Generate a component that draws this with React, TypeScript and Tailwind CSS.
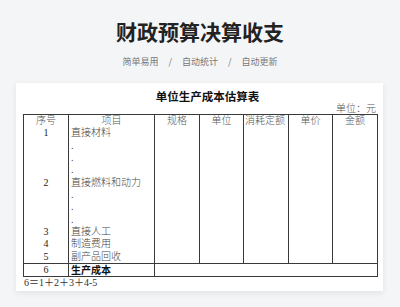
import React from "react";

const serif = { fontFamily: '"Liberation Serif", "Noto Sans CJK SC", serif' };

type Row = { n?: string; item?: string; dot?: boolean };

const rows: Row[] = [
  { n: "1", item: "直接材料" },
  { dot: true },
  { dot: true },
  { dot: true },
  { n: "2", item: "直接燃料和动力" },
  { dot: true },
  { dot: true },
  { dot: true },
  { n: "3", item: "直接人工" },
  { n: "4", item: "制造费用" },
  { n: "5", item: "副产品回收" },
];

export default function App() {
  const cell = "border-x border-[#3a3a3a] p-0 h-[12.33px] leading-[12.33px]";
  return (
    <div className="w-[400px] h-[307px] bg-[#f4f5f7] overflow-hidden" style={{ fontFamily: '"Noto Sans CJK SC", "Noto Sans", sans-serif' }}>
      <div className="pt-[17px] h-[45px] text-center text-[21px] leading-[28px] font-bold text-[#222]">财政预算决算收支</div>
      <div className="mt-[10px] flex justify-center items-center text-[9px] leading-[14px] text-[#777]">
        <span>简单易用</span>
        <span className="mx-[10px]">/</span>
        <span>自动统计</span>
        <span className="mx-[10px]">/</span>
        <span>自动更新</span>
      </div>
      <div className="mt-[14px] ml-[16px] w-[367px] h-[208px] bg-white shadow-[0_2px_6px_rgba(0,0,0,0.08)] pt-[6px] pl-[7px]" style={serif}>
        <div className="w-[355px] pl-[14px] text-center text-[11.5px] leading-[14px] font-bold text-[#111]" style={{ fontFamily: '"Noto Sans CJK SC", sans-serif' }}>
          单位生产成本估算表
        </div>
        <div className="w-[353px] text-right text-[10px] leading-[10px] text-[#555] pt-[1px] font-light">单位：元</div>
        <table className="table-fixed border-collapse border border-[#3a3a3a] text-[10px] text-[#444] font-light w-[355px]">
          <colgroup>
            <col className="w-[45px]" />
            <col className="w-[86px]" />
            <col className="w-[45px]" />
            <col className="w-[44px]" />
            <col className="w-[45px]" />
            <col className="w-[44px]" />
            <col className="w-[45px]" />
          </colgroup>
          <tbody>
            <tr className="text-[#555]">
              <td className={`${cell} text-center`}>序号</td>
              <td className={`${cell} text-center`}>项目</td>
              <td className={`${cell} text-center`}>规格</td>
              <td className={`${cell} text-center`}>单位</td>
              <td className={`${cell} text-left pl-[1px]`}>消耗定额</td>
              <td className={`${cell} text-center`}>单价</td>
              <td className={`${cell} text-center`}>金额</td>
            </tr>
            {rows.map((r, i) => (
              <tr key={i}>
                <td className={`${cell} text-center text-[#222]`}>{r.n ?? ""}</td>
                <td className={`${cell} text-left pl-[2px]`}>{r.dot ? "." : r.item}</td>
                <td className={cell}></td>
                <td className={cell}></td>
                <td className={cell}></td>
                <td className={cell}></td>
                <td className={cell}></td>
              </tr>
            ))}
            <tr className="border-t border-[#3a3a3a]">
              <td className="border-x border-[#3a3a3a] p-0 h-[12px] leading-[12px] text-center text-[#222]">6</td>
              <td className="border-x border-[#3a3a3a] p-0 h-[12px] leading-[12px] pl-[2px] font-bold text-[#111]" style={{ fontFamily: '"Noto Sans CJK SC", sans-serif' }}>生产成本</td>
              <td colSpan={5} className="border-x border-[#3a3a3a] p-0 h-[12px]"></td>
            </tr>
          </tbody>
        </table>
        <div className="pl-[1px] text-[10px] leading-[12px] text-[#333]">6＝1＋2＋3＋4-5</div>
      </div>
    </div>
  );
}
